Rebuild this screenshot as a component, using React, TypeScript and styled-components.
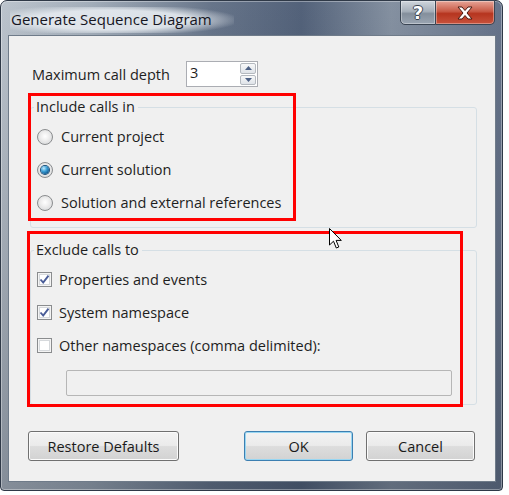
import styled, { createGlobalStyle } from "styled-components";
import React from "react";

const GlobalStyle = createGlobalStyle`
  html, body {
    margin: 0;
    padding: 0;
    background: #ffffff;
  }
  body {
    font-family: "Open Sans", "Noto Sans", sans-serif;
    font-size: 14.5px;
    color: #1e1e1e;
  }
`;

const Window = styled.div`
  position: relative;
  display: flex;
  flex-direction: column;
  width: 503px;
  height: 491px;
  box-sizing: border-box;
  border: 1px solid #2f3947;
  border-radius: 7px 7px 4px 4px;
  background:
    linear-gradient(to bottom, rgba(255, 255, 255, 0) 0%, rgba(30, 40, 55, 0.35) 100%),
    linear-gradient(to right, #bcc4cd 0%, #a2adb9 18%, #67758a 42%, #53627a 60%, #8591a1 78%, #66738a 100%);
  box-shadow: inset 0 0 0 1px rgba(255, 255, 255, 0.35);
`;

const TitleBar = styled.div`
  display: flex;
  align-items: flex-start;
  justify-content: space-between;
  height: 34px;
  padding: 0 7px 0 9px;
`;

const Title = styled.div`
  margin-top: 6px;
  padding: 0 22px 0 1px;
  height: 26px;
  line-height: 24px;
  font-size: 15px;
  color: #16161f;
  background: radial-gradient(ellipse 58% 62% at 45% 50%, rgba(230, 235, 240, 0.9) 60%, rgba(230, 235, 240, 0) 100%);
`;

const CaptionButtons = styled.div`
  display: flex;
  margin-top: -1px;
`;

const CaptionButton = styled.div<{ $close?: boolean }>`
  display: flex;
  align-items: center;
  justify-content: center;
  height: 25px;
  width: ${(p) => (p.$close ? "59px" : "36px")};
  box-sizing: border-box;
  border: 1px solid #3a4553;
  border-left-width: ${(p) => (p.$close ? "0" : "1px")};
  border-radius: ${(p) => (p.$close ? "0 0 5px 0" : "0 0 0 5px")};
  background: ${(p) =>
    p.$close
      ? "linear-gradient(to bottom, #e6a497 0%, #c85a46 45%, #b6351f 55%, #c8523c 100%)"
      : "linear-gradient(to bottom, #cfd5dc 0%, #a5afba 45%, #848f9c 55%, #9aa5b2 100%)"};
  box-shadow: inset 0 0 0 1px rgba(255, 255, 255, 0.35);
`;

const HelpGlyph = styled.span`
  font-family: "DejaVu Sans", sans-serif;
  font-weight: bold;
  font-size: 18px;
  line-height: 1;
  color: #ffffff;
  text-shadow: -1px 0 #3a4350, 1px 0 #3a4350, 0 -1px #3a4350, 0 1px #3a4350;
`;

const Client = styled.div`
  position: relative;
  flex: 1;
  margin: 0 6px 8px 7px;
  border: 1px solid #6f7b89;
  background: #f0f0f0;
  display: flex;
  flex-direction: column;
`;

const DepthRow = styled.div`
  display: flex;
  align-items: center;
  margin-top: 25px;
  padding-left: 23px;
  height: 26px;
`;

const DepthLabel = styled.span`
  width: 154px;
`;

const SpinBox = styled.div`
  display: flex;
  align-items: stretch;
  width: 72px;
  height: 26px;
  box-sizing: border-box;
  border: 1px solid #abadb3;
  background: #ffffff;
`;

const SpinValue = styled.div`
  flex: 1;
  padding: 1px 0 0 3px;
  line-height: 20px;
`;

const SpinButtons = styled.div`
  display: flex;
  flex-direction: column;
  justify-content: center;
  gap: 1px;
  padding: 1px 1px 1px 0;
`;

const SpinButton = styled.div`
  display: flex;
  align-items: center;
  justify-content: center;
  width: 14px;
  height: 10px;
  border: 1px solid #b4b9bf;
  border-radius: 2px;
  background: linear-gradient(to bottom, #f7f8f9, #dfe3e8);
`;

const Group = styled.fieldset<{ $top: number }>`
  margin: ${(p) => p.$top}px 18px 0 21px;
  padding: 0 0 8px 6px;
  border: 1px solid #d5dfe5;
  border-radius: 3px;
  min-width: 0;
`;

const Legend = styled.legend`
  margin-left: -3px;
  padding: 0 3px 0 2px;
  line-height: 20px;
  color: #1e1e1e;
`;

const OptionRow = styled.label<{ $gap: number }>`
  display: flex;
  align-items: center;
  gap: ${(p) => p.$gap}px;
  height: 33px;
`;

const OptionList = styled.div`
  padding-top: 3px;
`;

const Radio = styled.span<{ $checked?: boolean }>`
  display: flex;
  align-items: center;
  justify-content: center;
  width: 16px;
  height: 16px;
  box-sizing: border-box;
  border-radius: 50%;
  border: 1px solid #8a8c8e;
  background: radial-gradient(circle at 50% 45%, #ffffff 0%, #eeeeee 40%, #cfd1d3 100%);
  &::after {
    content: "";
    display: ${(p) => (p.$checked ? "block" : "none")};
    width: 8px;
    height: 8px;
    border-radius: 50%;
    background: radial-gradient(circle at 35% 30%, #c4ecff 0%, #3c9fd6 40%, #125e96 75%, #0b3e68 100%);
    box-shadow: 0 0 0 1px #1b4f7a;
  }
`;

const Check = styled.span`
  display: flex;
  align-items: center;
  justify-content: center;
  width: 15px;
  height: 15px;
  box-sizing: border-box;
  border: 1px solid #8a8c8e;
  background: #ffffff;
  box-shadow: inset 0 0 0 1px #f4f4f4, inset 0 0 0 2px #d6d9dc;
`;

const TextField = styled.div`
  margin: 8px 0 0 29px;
  width: 386px;
  height: 26px;
  box-sizing: border-box;
  border: 1px solid #b6b6b6;
  border-radius: 2px;
  background: #f0f0f0;
`;

const ButtonRow = styled.div`
  display: flex;
  justify-content: space-between;
  margin-top: 26px;
  padding: 0 20px 0 19px;
`;

const ButtonGroup = styled.div`
  display: flex;
  gap: 13px;
`;

const Button = styled.button<{ $width: number; $default?: boolean }>`
  width: ${(p) => p.$width}px;
  height: 30px;
  font-family: inherit;
  font-size: 14.5px;
  color: #1a1a1a;
  border: 1px solid ${(p) => (p.$default ? "#3c7fb1" : "#707070")};
  border-radius: 3px;
  background: linear-gradient(to bottom, #f3f3f3 0%, #ebebeb 48%, #dddddd 52%, #d2d2d2 100%);
  box-shadow: inset 0 0 0 1px ${(p) => (p.$default ? "#98d6f2" : "#fbfbfb")};
  padding: 0;
`;

const Highlight = styled.div<{ $l: number; $t: number; $w: number; $h: number }>`
  position: absolute;
  left: ${(p) => p.$l}px;
  top: ${(p) => p.$t}px;
  width: ${(p) => p.$w}px;
  height: ${(p) => p.$h}px;
  box-sizing: border-box;
  border: 3px solid #ff0000;
  pointer-events: none;
`;

const Cursor = styled.svg`
  position: absolute;
  left: 320px;
  top: 192px;
`;

const CheckMark = () => (
  <svg width="11" height="11" viewBox="0 0 11 11">
    <path d="M1.5 5.5 L4.2 8.6 L9.5 1.6" fill="none" stroke="#4a5d98" strokeWidth="1.9" />
  </svg>
);

const Triangle = ({ up }: { up?: boolean }) => (
  <svg width="7" height="4" viewBox="0 0 7 4">
    <path d={up ? "M0 4 L3.5 0 L7 4 Z" : "M0 0 L3.5 4 L7 0 Z"} fill="#4d6185" />
  </svg>
);

export default function App() {
  return (
    <>
      <GlobalStyle />
      <Window>
        <TitleBar>
          <Title>Generate Sequence Diagram</Title>
          <CaptionButtons>
            <CaptionButton>
              <HelpGlyph>?</HelpGlyph>
            </CaptionButton>
            <CaptionButton $close>
              <svg width="18" height="14" viewBox="0 0 18 14">
                <path
                  d="M2 1 L6 1 L9 4.5 L12 1 L16 1 L11 7 L16 13 L12 13 L9 9.5 L6 13 L2 13 L7 7 Z"
                  fill="#ffffff"
                  stroke="#4a1a12"
                  strokeWidth="1"
                  strokeLinejoin="round"
                />
              </svg>
            </CaptionButton>
          </CaptionButtons>
        </TitleBar>
        <Client>
          <DepthRow>
            <DepthLabel>Maximum call depth</DepthLabel>
            <SpinBox>
              <SpinValue>3</SpinValue>
              <SpinButtons>
                <SpinButton>
                  <Triangle up />
                </SpinButton>
                <SpinButton>
                  <Triangle />
                </SpinButton>
              </SpinButtons>
            </SpinBox>
          </DepthRow>

          <Group $top={10}>
            <Legend>Include calls in</Legend>
            <OptionList>
              <OptionRow $gap={8}>
                <Radio />
                Current project
              </OptionRow>
              <OptionRow $gap={8}>
                <Radio $checked />
                Current solution
              </OptionRow>
              <OptionRow $gap={8}>
                <Radio />
                Solution and external references
              </OptionRow>
            </OptionList>
          </Group>

          <Group $top={12}>
            <Legend>Exclude calls to</Legend>
            <OptionList>
              <OptionRow $gap={7}>
                <Check>
                  <CheckMark />
                </Check>
                Properties and events
              </OptionRow>
              <OptionRow $gap={7}>
                <Check>
                  <CheckMark />
                </Check>
                System namespace
              </OptionRow>
              <OptionRow $gap={7}>
                <Check />
                Other namespaces (comma delimited):
              </OptionRow>
            </OptionList>
            <TextField />
          </Group>

          <ButtonRow>
            <Button $width={151}>Restore Defaults</Button>
            <ButtonGroup>
              <Button $width={109} $default>
                OK
              </Button>
              <Button $width={109}>Cancel</Button>
            </ButtonGroup>
          </ButtonRow>

          <Highlight $l={19} $t={57} $w={268} $h={128} />
          <Highlight $l={18} $t={195} $w={436} $h={176} />

          <Cursor width="14" height="22" viewBox="0 0 14 22">
            <path
              d="M0.5 0.5 L0.5 17 L4.5 13.2 L7.3 20 L9.8 19 L7.1 12.4 L12.3 12.4 Z"
              fill="#ffffff"
              stroke="#000000"
              strokeWidth="1"
              strokeLinejoin="round"
            />
          </Cursor>
        </Client>
      </Window>
    </>
  );
}
